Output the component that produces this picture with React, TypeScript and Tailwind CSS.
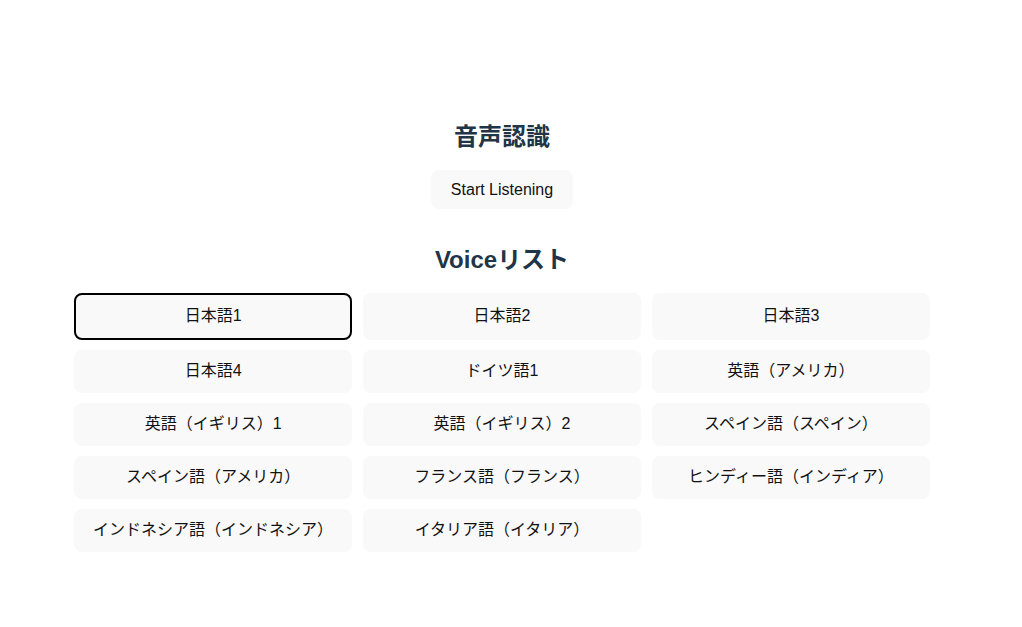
const voices = [
  "日本語1",
  "日本語2",
  "日本語3",
  "日本語4",
  "ドイツ語1",
  "英語（アメリカ）",
  "英語（イギリス）1",
  "英語（イギリス）2",
  "スペイン語（スペイン）",
  "スペイン語（アメリカ）",
  "フランス語（フランス）",
  "ヒンディー語（インディア）",
  "インドネシア語（インドネシア）",
  "イタリア語（イタリア）",
];

const font = {
  fontFamily: '"Liberation Sans", "Noto Sans CJK JP", sans-serif',
};

export default function App() {
  const selected = 0;
  return (
    <div className="min-h-screen bg-white" style={font}>
      <div className="w-[1004px] flex flex-col items-center pt-[121px]">
        <h2 className="text-[24px] leading-[32px] font-bold text-[#213547]">音声認識</h2>
        <button className="mt-[17px] h-[39px] px-5 rounded-lg bg-[#f9f9f9] text-[16px] text-[#111]">
          Start Listening
        </button>
        <h2 className="mt-[35px] text-[24px] leading-[32px] font-bold text-[#213547]">Voiceリスト</h2>
        <div className="mt-[17px] w-[856px] grid grid-cols-3 gap-x-[10.7px] gap-y-[10.6px]">
          {voices.map((v, i) => (
            <button
              key={v}
              className={
                i === selected
                  ? "py-[10px] leading-[22.5px] rounded-lg bg-[#f9f9f9] text-[16px] text-[#111] border-2 border-black"
                  : "py-[10px] leading-[22.5px] rounded-lg bg-[#f9f9f9] text-[16px] text-[#111]"
              }
            >
              {v}
            </button>
          ))}
        </div>
      </div>
    </div>
  );
}
